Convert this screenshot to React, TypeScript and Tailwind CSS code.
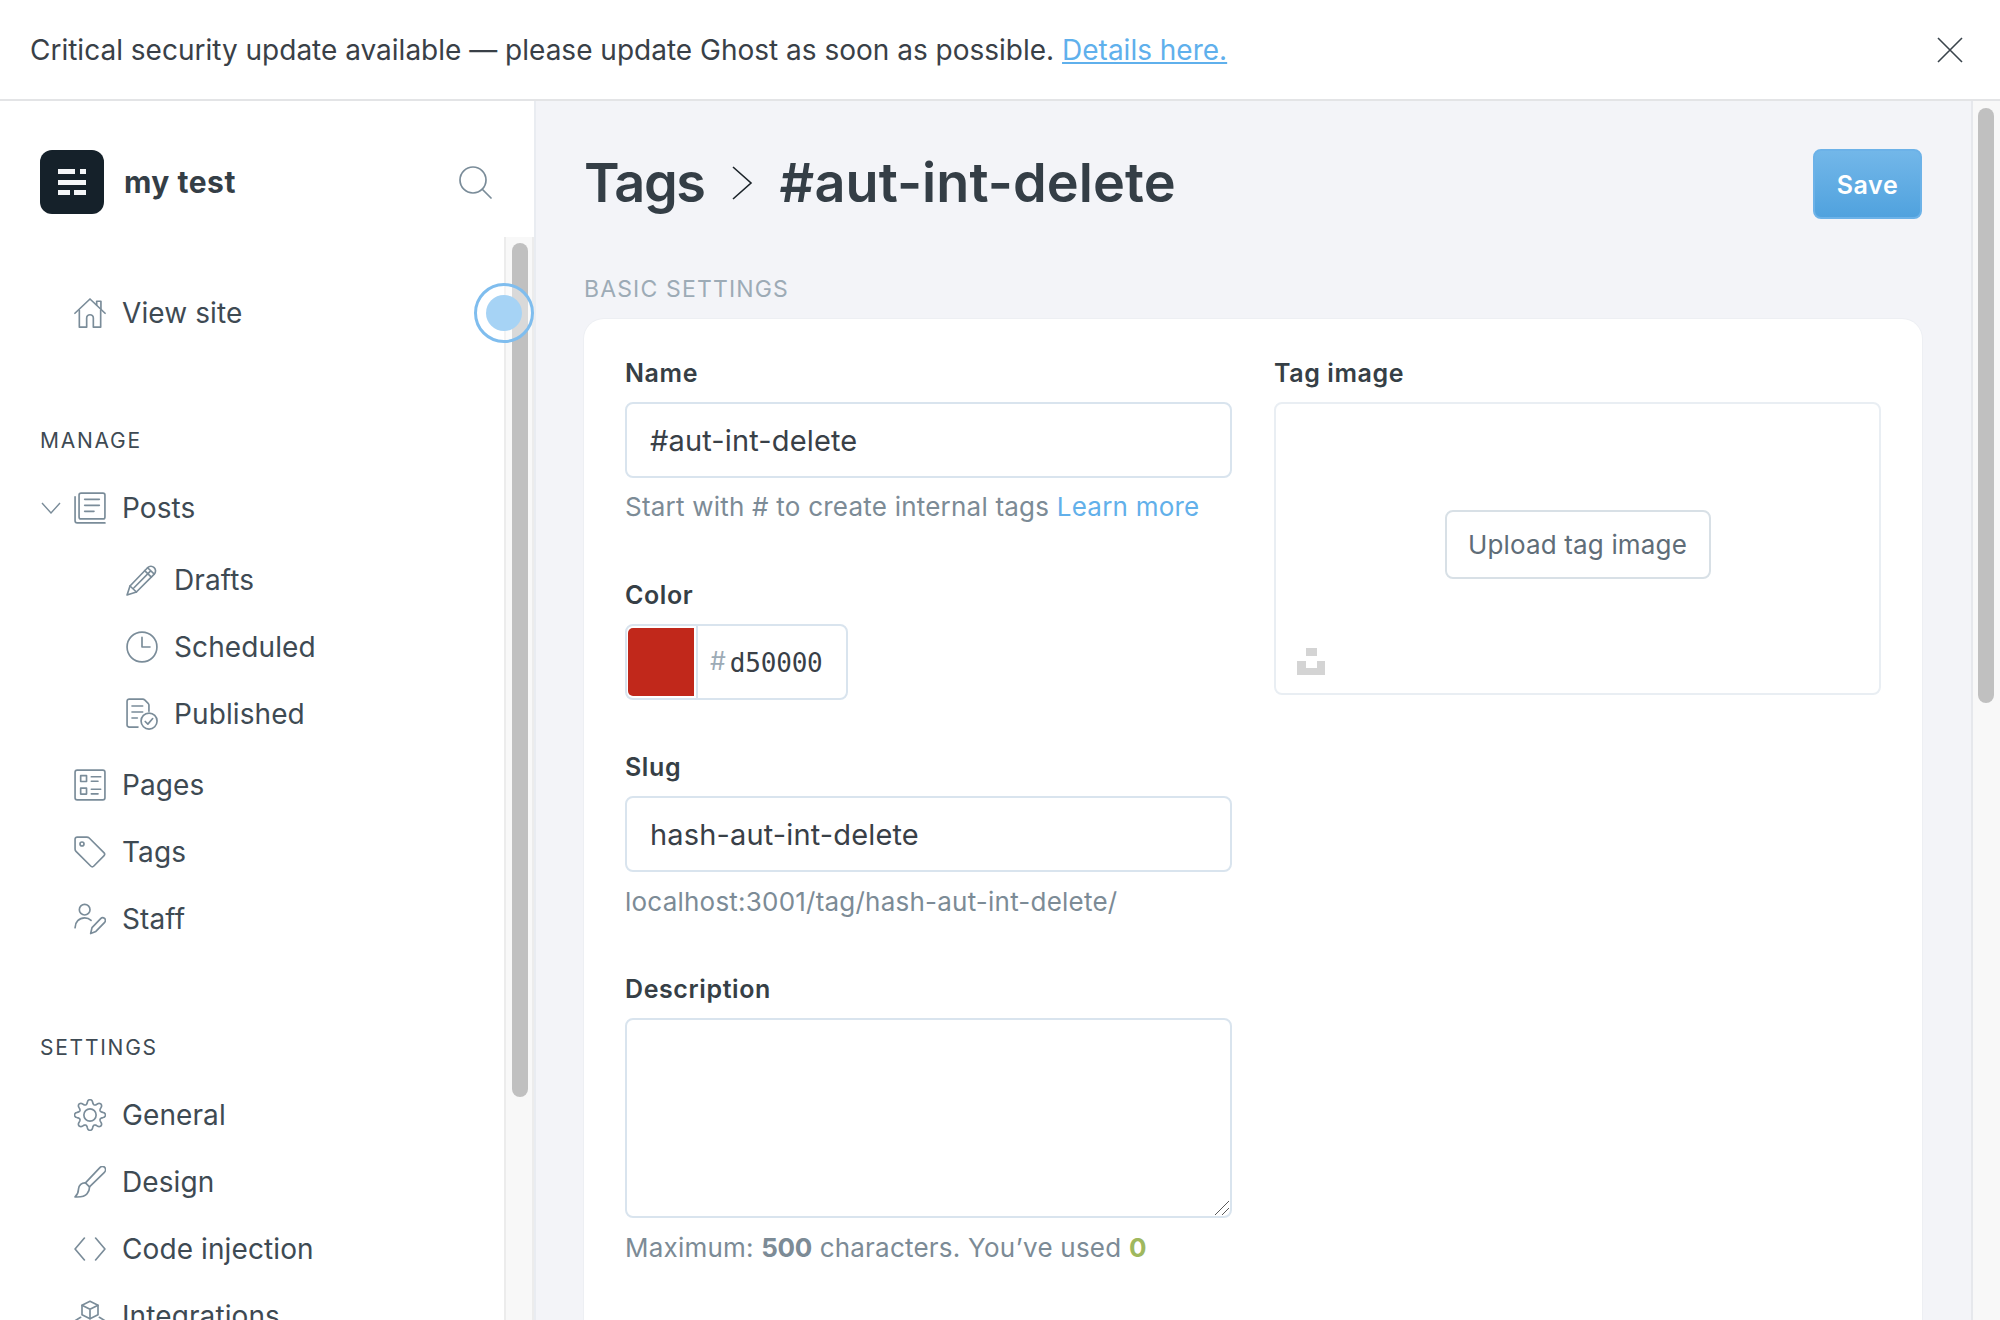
import React from "react";

const S = ({ children, size = 32 }: { children: React.ReactNode; size?: number }) => (
  <svg width={size} height={size} viewBox="0 0 24 24" fill="none" stroke="#7a8c99" strokeWidth="1.25" strokeLinecap="round" strokeLinejoin="round" className="shrink-0">
    {children}
  </svg>
);

const House = () => (
  <S>
    <path d="M.7 12.2 12 1.5l11.3 10.7" />
    <path d="M17 6V3.2h3.2V9" />
    <path d="M4 10v12.6h5.5v-6.8a2.5 2.5 0 0 1 5 0v6.8H20V10" />
  </S>
);
const Posts = () => (
  <S>
    <rect x="3.8" y=".8" width="19.4" height="19.4" rx="1.5" />
    <path d="M8 5.5h11M8 10h11M8 14.5h7" />
    <path d="M.8 3.6v18a1.6 1.6 0 0 0 1.6 1.6h20.8" />
  </S>
);
const Pencil = () => (
  <S>
    <path d="M3 16.5 16.2 2.8a3.4 3.4 0 0 1 5 4.8L7.8 21 .8 23.2z" />
    <path d="M3 16.5 7.8 21M6 17.8 18.500 5.200M16.200 2.800l5 4.800M14 5l5 4.800" />
  </S>
);
const Clock = () => (
  <S>
    <circle cx="12" cy="12" r="11.2" />
    <path d="M12 4.8V12h6" />
  </S>
);
const Published = () => (
  <S>
    <path d="M9 21.8H2.4A1.6 1.6 0 0 1 .8 20.2V2.4A1.6 1.6 0 0 1 2.4.8h10.2c.6 0 1 .2 1.4.6l2.6 2.6c.4.4.6.8.6 1.4V10" />
    <path d="M4.5 6h8M4.5 10.5h8M4.5 15h4" />
    <circle cx="17.3" cy="17.3" r="6" />
    <path d="m14.4 17.6 2 2 3.6-4.2" />
  </S>
);
const Pages = () => (
  <S>
    <rect x=".8" y=".8" width="22.4" height="22.4" rx="1.6" />
    <rect x="5" y="5" width="4.4" height="4.4" />
    <rect x="5" y="14.4" width="4.4" height="4.4" />
    <path d="M13 5.800h7M13 9.200h5M13 15.200h7M13 18.600h5" />
  </S>
);
const Tag = () => (
  <S>
    <path d="M.8 2.4A1.6 1.6 0 0 1 2.4.8h7.2c.7 0 1.3.2 1.8.7l11 11c.8.8.8 1.6 0 2.4l-7.5 7.6c-.8.8-1.6.8-2.4 0l-11-11C1 11 .8 10.400.8 9.700z" />
    <circle cx="6" cy="6" r="1.5" />
  </S>
);
const Staff = () => (
  <S>
    <circle cx="8" cy="5" r="4" />
    <path d="M.8 18.500c0-4.200 3-7.300 7.200-7.300 2 0 3.600.7 4.800 1.800" />
    <path d="m13.500 18.500 6.500-6.800a2 2 0 0 1 3 2.800l-6.600 6.800-3.900 1.600z" />
  </S>
);
const Brush = () => (
  <S>
    <path d="M23 1c-1-1-2.600-.9-3.600.2L8.600 12.700l3 2.900L22.600 5c1.100-1.100 1.300-3 .4-4z" />
    <path d="M8.600 12.700c-2.800-.2-5 1.700-5.200 4.500-.1 2.300-.7 4.200-2.600 6 4 .2 7.400-.3 9-2.400 1.500-1.900 1.900-3.800 1.800-5.200" />
  </S>
);
const Code = () => (
  <S>
    <path d="M7.800 3.800.8 12l7 8.200M16.200 3.800l7 8.200-7 8.200" />
  </S>
);
const Integrations = () => (
  <S>
    <path d="M12 1 18 4v7l-6 3-6-3V4z" />
    <path d="M6 4l6 3 6-3M12 7v7" />
    <path d="M5 13 .8 15.500v6L6 24l6-3 6 3 5.200-2.500v-6L19 13" />
  </S>
);

const gearPath =
  Array.from({ length: 160 }, (_, i) => {
    const a = (i / 160) * Math.PI * 2 - Math.PI / 2;
    const c = Math.cos(8 * (a + Math.PI / 2));
    const r = 9.9 + 1.7 * Math.sign(c) * Math.pow(Math.abs(c), 0.7);
    return `${i === 0 ? "M" : "L"}${(12 + r * Math.cos(a)).toFixed(2)} ${(12 + r * Math.sin(a)).toFixed(2)}`;
  }).join("") + "Z";

const Gear = () => (
  <S>
    <path d={gearPath} />
    <circle cx="12" cy="12" r="4.6" />
  </S>
);

const Row = ({ icon, label, sub = false }: { icon: React.ReactNode; label: string; sub?: boolean }) => (
  <div className={`flex h-[67px] items-center gap-4 ${sub ? "pl-[126px]" : "pl-[74px]"}`}>
    {icon}
    <span className="text-[28px] leading-none tracking-[0.1px] text-[#3e4a53]">{label}</span>
  </div>
);

const SectionHead = ({ children, className = "" }: { children: React.ReactNode; className?: string }) => (
  <div className={`h-8 pl-10 text-[21px] font-normal leading-8 tracking-[1.75px] text-[#3e4a53] ${className}`}>{children}</div>
);

const Label = ({ children }: { children: React.ReactNode }) => (
  <label className="mb-[13px] block h-8 text-[25px] font-semibold leading-8 tracking-[0.6px] text-[#363f46]">{children}</label>
);

const fieldClass =
  "block h-[76px] w-full rounded-lg border-2 border-[#d9e4ee] bg-white px-[23px] text-[29px] tracking-[0.15px] text-[#394047] outline-none";

const Help = ({ children, className = "" }: { children: React.ReactNode; className?: string }) => (
  <p className={`h-8 text-[26px] leading-8 tracking-[0.22px] text-[#7c8b96] ${className}`}>{children}</p>
);

export default function App() {
  return (
    <div className="flex h-[1320px] w-[2000px] flex-col overflow-hidden bg-white font-['Inter',sans-serif]">
      <header className="flex h-[101px] shrink-0 items-center justify-between border-b-2 border-[#e3e4e6] pl-[30px] pr-[37px]">
        <p className="text-[28px] tracking-[0px] text-[#394047]">
          Critical security update available — please update Ghost as soon as possible.{" "}
          <a className="text-[#5fb0ec] underline">Details here.</a>
        </p>
        <svg width="26" height="26" viewBox="0 0 26 26" stroke="#3a444c" strokeWidth="1.6" fill="none">
          <path d="M1 1l24 24M25 1 1 25" />
        </svg>
      </header>

      <div className="flex min-h-0 flex-1">
        <aside className="flex w-[536px] shrink-0 flex-col border-r-2 border-[#e9ecf1]">
          <div className="flex h-[136px] shrink-0 items-center pl-10 pr-[42px] pt-[26px]">
            <svg width="64" height="64" viewBox="0 0 64 64" className="shrink-0">
              <rect width="64" height="64" rx="12" fill="#15212a" />
              <path fill="#f4f6f8" d="M18 19h17v5H18zM40 19h6v5h-6zM18 30h28v5H18zM18 40h12v5H18zM34 40h12v5H34z" />
            </svg>
            <span className="ml-5 flex-1 text-[30px] font-bold tracking-[0.5px] text-[#343e46]">my test</span>
            <svg width="33" height="33" viewBox="0 0 33 33" fill="none" stroke="#7a8c99" strokeWidth="1.7" strokeLinecap="round">
              <circle cx="14" cy="14" r="13" />
              <path d="m23.500 23.500 8.500 8.500" />
            </svg>
          </div>

          <div className="relative flex min-h-0 flex-1">
            <nav className="min-w-0 flex-1 overflow-hidden pt-[42px]">
              <Row icon={<House />} label="View site" />
              <SectionHead className="mt-[79px]">MANAGE</SectionHead>
              <div className="relative mt-[17px]">
                <svg width="20" height="12" viewBox="0 0 20 12" fill="none" stroke="#7a8c99" strokeWidth="1.4" className="absolute left-[41px] top-[28px]">
                  <path d="M1 1l9 10 9-10" />
                </svg>
                <Row icon={<Posts />} label="Posts" />
              </div>
              <div className="mb-[4px] mt-[5px]">
                <Row sub icon={<Pencil />} label="Drafts" />
                <Row sub icon={<Clock />} label="Scheduled" />
                <Row sub icon={<Published />} label="Published" />
              </div>
              <Row icon={<Pages />} label="Pages" />
              <Row icon={<Tag />} label="Tags" />
              <Row icon={<Staff />} label="Staff" />
              <SectionHead className="mt-[80px]">SETTINGS</SectionHead>
              <div className="mt-[17px]">
                <Row icon={<Gear />} label="General" />
                <Row icon={<Brush />} label="Design" />
                <Row icon={<Code />} label="Code injection" />
                <Row icon={<Integrations />} label="Integrations" />
              </div>
            </nav>
            <div className="w-[30px] shrink-0 border-x-2 border-x-[#ececec] bg-[#f8f8f8] pl-[6px] pr-[2px] pt-[6px]">
              <div className="h-[854px] w-4 rounded-lg bg-[#c0c0c0]" />
            </div>
            <div className="absolute left-[474px] top-[46px] flex h-[60px] w-[60px] items-center justify-center rounded-full border-[3px] border-[#7fbdee] bg-white/40">
              <div className="h-9 w-9 rounded-full bg-[#a6d3f5]" />
            </div>
          </div>
        </aside>

        <main className="flex min-w-0 flex-1 bg-[#f3f4f8]">
          <div className="min-w-0 flex-1 pl-[48px] pr-[49px]">
            <div className="flex h-[118px] items-start justify-between pt-[48px]">
              <h1 className="-mt-[1px] flex items-center text-[54px] font-semibold leading-[70px] tracking-[0.1px] text-[#343e46]">
                <span className="tracking-[-1.4px]">Tags</span>
                <svg width="22" height="36" viewBox="0 0 22 36" fill="none" stroke="#1b2329" strokeWidth="1.6" className="ml-[26px] mr-[27px]">
                  <path d="M2 2l18 16L2 34" />
                </svg>
                <span>#aut-int-delete</span>
              </h1>
              <button className="h-[70px] w-[109px] rounded-lg border-2 border-[#6cb2e8] bg-gradient-to-b from-[#72b7e9] to-[#50a2de] pt-[3px] text-[25px] font-semibold tracking-[0.6px] text-white">
                Save
              </button>
            </div>
            <h2 className="mt-[54px] h-8 text-[23px] leading-8 tracking-[1.15px] text-[#9dabb6]">BASIC SETTINGS</h2>
            <section className="mt-[14px] grid grid-cols-2 gap-x-[42px] rounded-t-[20px] bg-white px-[41px] pb-20 pt-[38px] shadow-[0_0_0_1px_#edeff3]">
              <div>
                <Label>Name</Label>
                <input className={fieldClass} defaultValue="#aut-int-delete" readOnly />
                <Help className="mt-[13px]">
                  Start with # to create internal tags <span className="text-[#62b0ea]">Learn more</span>
                </Help>

                <div className="mt-[56px]">
                  <Label>Color</Label>
                  <div className="flex h-[76px] w-[223px] overflow-hidden rounded-lg border-2 border-[#d9e4ee]">
                    <div className="my-[2px] ml-[1px] w-[66px] rounded-l-[5px] bg-[#c1281b]" />
                    <div className="ml-[2px] flex flex-1 items-center border-l-2 border-[#d9e4ee] pl-3">
                      <span className="text-[25px] text-[#9dabb6]">#</span>
                      <span className="ml-[4px] mt-[2px] font-['DejaVu_Sans_Mono',monospace] text-[26px] tracking-[-0.2px] text-[#394047]">d50000</span>
                    </div>
                  </div>
                </div>

                <div className="mt-[51px]">
                  <Label>Slug</Label>
                  <input className={fieldClass} defaultValue="hash-aut-int-delete" readOnly />
                  <Help className="mt-[14px]">localhost:3001/tag/hash-aut-int-delete/</Help>
                </div>

                <div className="mt-[55px]">
                  <Label>Description</Label>
                  <div className="relative">
                    <textarea className={`${fieldClass} h-[200px] resize-none`} readOnly />
                    <svg width="16" height="16" viewBox="0 0 16 16" fill="none" stroke="#5a5a5a" strokeWidth="1" className="absolute bottom-[2px] right-[2px]">
                      <path d="M1 15 15 1M8 15l7-7" />
                    </svg>
                  </div>
                  <Help className="mt-[14px]">
                    Maximum: <b className="font-bold tracking-[-0.3px]">500</b> characters. You’ve used{" "}
                    <b className="font-bold text-[#9fb85e]">0</b>
                  </Help>
                </div>
              </div>

              <div>
                <Label>Tag image</Label>
                <div className="relative flex h-[293px] items-center justify-center rounded-lg border-2 border-[#e9eef3] pb-[9px]">
                  <button className="h-[69px] w-[266px] rounded-lg border-2 border-[#d8e0e6] bg-white text-[26px] tracking-[0.15px] text-[#5f6d78]">
                    Upload tag image
                  </button>
                  <svg width="28" height="27" viewBox="0 0 28 27" className="absolute bottom-[18px] left-[21px]">
                    <path fill="#d4d4d4" d="M9 0h11v8H9zM0 13h9v7h11v-7h8v14H0z" />
                  </svg>
                </div>
              </div>
            </section>
          </div>
          <div className="w-[29px] shrink-0 border-l-2 border-[#e6e8ec] bg-[#f8f8f8] pl-[5px] pt-[7px]">
            <div className="h-[595px] w-4 rounded-lg bg-[#c0c0c0]" />
          </div>
        </main>
      </div>
    </div>
  );
}
